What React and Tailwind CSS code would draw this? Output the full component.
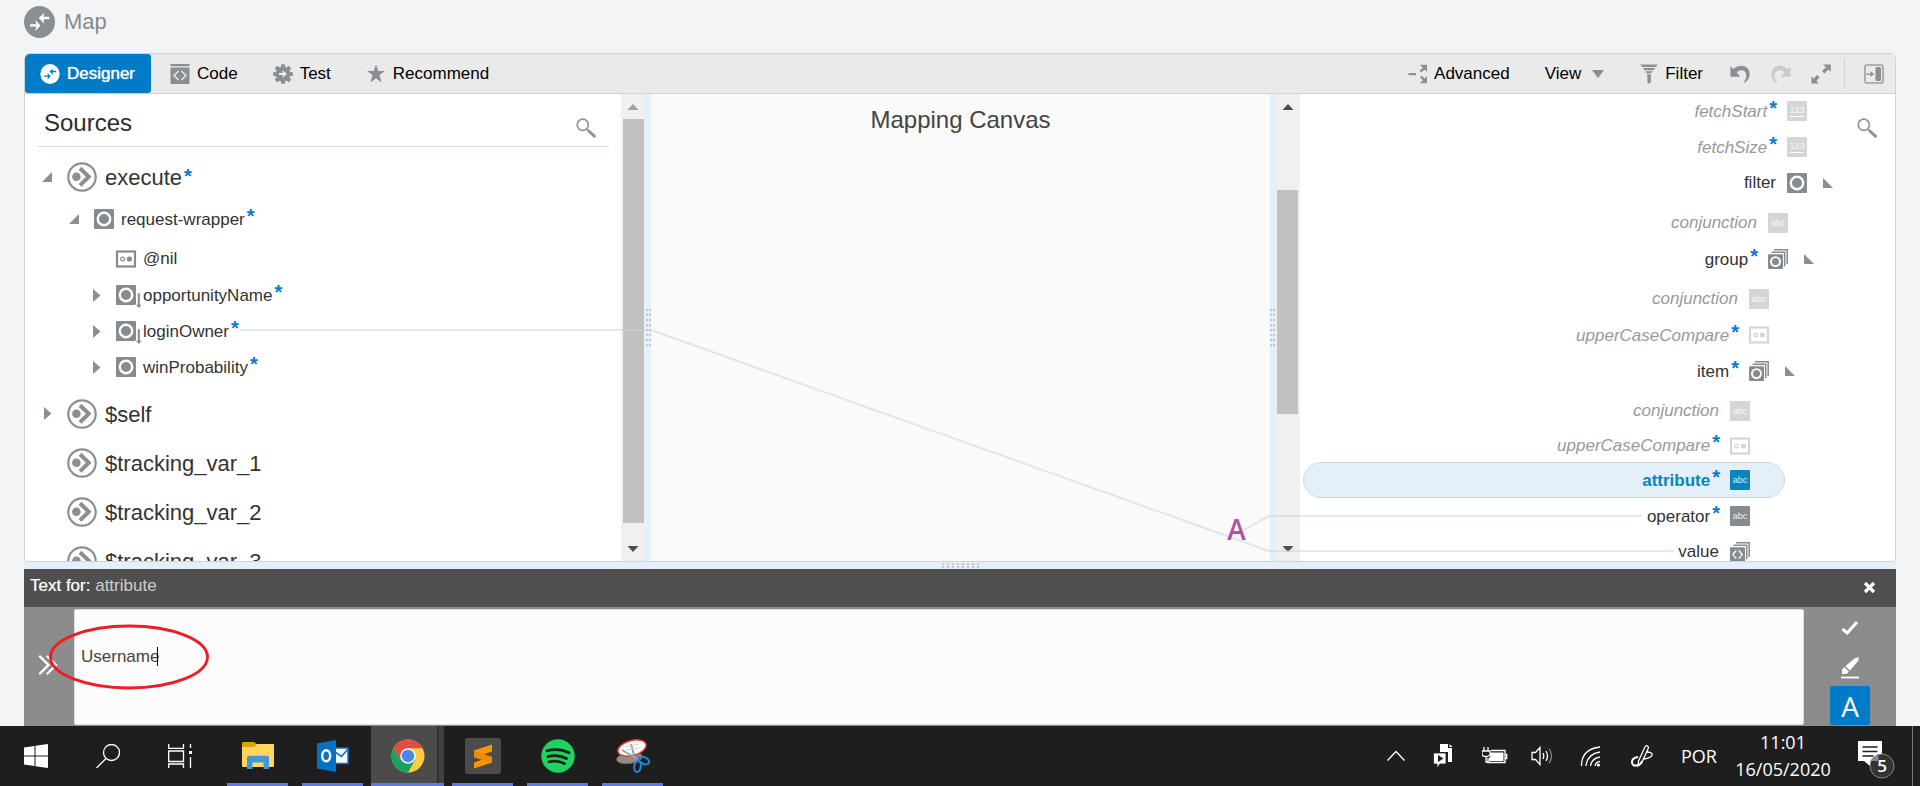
import React from "react";

const SANS = "font-['Liberation_Sans',Arial,sans-serif]";
const SEGOE = "font-['Open_Sans','Noto_Sans',sans-serif]";

/* ---------- glyphs ---------- */

function MapGlyph({ className, disc, arrow }) {
  return (
    <svg viewBox="0 0 31 32" className={className} aria-hidden="true">
      <ellipse cx="15.5" cy="16" rx="15.5" ry="16" fill={disc} />
      <path d="M6 18.200h6.200l-.9-4.200 5.200 5.500-5.200 5.500.9-4.500H6z" fill={arrow} />
      <path d="M25.300 10.800h-5.800l.8-3.800-5.600 5.100 5.400 5.400-.6-4.200h5.800z" fill={arrow} />
    </svg>
  );
}

function CodeGlyph() {
  return (
    <svg viewBox="0 0 20 20" className="size-5" aria-hidden="true">
      <path d="M.5 0h19v2.2H.5zM.5 3.6h19V20H.5z" fill="#8a8f93" />
      <path d="M8.6 7 4 11.6 8.6 16M11.4 7l4.6 4.6-4.6 4.4" fill="none" stroke="#ececec" strokeWidth="1.4" />
    </svg>
  );
}

function GearGlyph() {
  return (
    <svg viewBox="0 0 20 20" className="size-5" aria-hidden="true">
      <g fill="#8a8f93">
        <circle cx="10" cy="10" r="7.4" />
        {[0, 45, 90, 135].map((a) => (
          <rect key={a} x="8" y="0.2" width="4" height="19.6" rx="0.6" transform={`rotate(${a} 10 10)`} />
        ))}
      </g>
      <path d="M6 9h3.6V6.3L14 10l-4.400 3.700V11H6z" fill="#ececec" />
    </svg>
  );
}

function StarGlyph() {
  return (
    <svg viewBox="0 0 18 19" className="h-[19px] w-[18px]" aria-hidden="true">
      <path d="M9 .5l2.200 6.400H18l-5.400 4.200 2 7.400L9 14.200l-5.600 4.300 2-7.400L0 6.900h6.800z" fill="#8a8f93" />
    </svg>
  );
}

function AdvancedGlyph() {
  return (
    <svg viewBox="0 0 20 20" className="size-5" aria-hidden="true">
      <g fill="#8a8f93">
        <path d="M.5 9h7.500v2.200H.5zM11.500.8H19v7l-2.300-2.200-3.400 3-1.700-1.800 3.300-3.300zM11.500 19.200H19v-7l-2.300 2.200-3-2.600-1.700 1.800 2.900 2.900z" />
      </g>
    </svg>
  );
}

function FunnelGlyph() {
  return (
    <svg viewBox="0 0 18 20" className="h-5 w-[18px]" aria-hidden="true">
      <path d="M.5.5h17L16 3H2zM3 4h12l-1.500 2.200h-9zM5.300 7.200h7.400l-1.400 2H6.700zM7.200 10.200h3.600v8l-2.400 1.500H7.600z" fill="#8a8f93" />
    </svg>
  );
}

function UndoGlyph({ flip }) {
  return (
    <svg viewBox="0 0 20 18" className={flip ? "h-[18px] w-5 -scale-x-100" : "h-[18px] w-5"} aria-hidden="true">
      <path
        d="M.4 1.200l3 2.900C6 1.600 9 .8 11.500.8c5 0 8.200 3.700 8.200 8 0 3.500-1.500 6.400-4.300 8.700h-2c2.100-2.400 2.900-4.700 2.900-7 0-3.100-2.100-5.300-5-5.300-1.800 0-3.400.8-4.700 2l3.600 4.600H.4z"
        fill={flip ? "#c9cccf" : "#8a8f93"}
      />
    </svg>
  );
}

function ExpandGlyph() {
  return (
    <svg viewBox="0 0 20 20" className="size-5" aria-hidden="true">
      <path
        d="M12 .5h7.800v7.400l-2.400-2.300-4 4L11 7.200l3.800-4zM8 19.500H.4v-7.200l2.200 2.100 3.600-3.400 2.400 2.300-3.300 3.600z"
        fill="#8a8f93"
      />
    </svg>
  );
}

function PanelGlyph() {
  return (
    <svg viewBox="0 0 20 20" className="size-5" aria-hidden="true">
      <rect x="1" y="1" width="18" height="18" rx="1.500" fill="none" stroke="#9a9ea2" strokeWidth="1.600" />
      <rect x="11.500" y="3" width="5.500" height="14" rx="1.500" fill="#8a8f93" />
      <path d="M2.500 9.400h4V7.200L10 10l-3.500 2.900v-2.200h-4z" fill="#8a8f93" />
    </svg>
  );
}

function SearchGlyph() {
  return (
    <svg viewBox="0 0 20 20" className="size-5" aria-hidden="true">
      <circle cx="6.800" cy="6.800" r="5.600" fill="none" stroke="#8f9396" strokeWidth="1.700" />
      <path d="M10.800 11l2 2" stroke="#8f9396" strokeWidth="1.600" />
      <path d="M12.800 13l5.600 5.200" stroke="#8f9396" strokeWidth="3" strokeLinecap="round" />
    </svg>
  );
}

function Arrow({ dir }) {
  const d = { open: "M10 0v10H0z", openRight: "M0 0v10h10z", closed: "M2 0v13L9.500 6.500z" }[dir];
  return (
    <svg viewBox={dir === "closed" ? "0 0 10 13" : "0 0 10 10"} className={dir === "closed" ? "h-[13px] w-[10px]" : "size-[10px]"} aria-hidden="true">
      <path d={d} fill="#8a8f91" />
    </svg>
  );
}

function RootGlyph() {
  return (
    <svg viewBox="0 0 30 30" className="size-[30px]" aria-hidden="true">
      <circle cx="15" cy="15" r="13.700" fill="none" stroke="#8a8f93" strokeWidth="2.200" />
      <circle cx="9.400" cy="14.800" r="4.300" fill="#8a8f93" />
      <path d="M13 6.200l8.800 8.600L13 23.400" fill="none" stroke="#8a8f93" strokeWidth="4" />
    </svg>
  );
}

function NodeGlyph({ kind, tone = "#868b8f" }) {
  const text = kind === "abc" || kind === "123";
  return (
    <svg viewBox="0 0 20 20" className="size-5 overflow-visible font-normal not-italic" aria-hidden="true">
      {(kind === "element" || kind === "elementKey") && (
        <>
          <rect width="20" height="20" rx="1" fill={tone} />
          <circle cx="10" cy="10" r="6.200" fill="none" stroke="#fff" strokeWidth="2.400" />
        </>
      )}
      {kind === "elementKey" && (
        <path d="M21.500 8h2.600v11.500h2l-3.300 3.800-3.300-3.800h2z" fill={tone} stroke="#fff" strokeWidth="0.500" />
      )}
      {kind === "bool" && (
        <>
          <rect x="1" y="2.500" width="18" height="15" fill="none" stroke={tone} strokeWidth="2.200" />
          <circle cx="6.600" cy="10" r="1.900" fill="none" stroke={tone} strokeWidth="1.200" />
          <circle cx="13.400" cy="10" r="2.600" fill={tone} />
        </>
      )}
      {(kind === "stack" || kind === "codeStack") && (
        <>
          <path d="M6 .8h13.200V15M3.500 3.300h13.200v14" fill="none" stroke={tone} strokeWidth="1.500" />
          <rect x="0" y="5.200" width="15" height="14.800" rx="1" fill={tone} />
          {kind === "stack" ? (
            <circle cx="7.500" cy="12.600" r="4.500" fill="none" stroke="#fff" strokeWidth="1.900" />
          ) : (
            <path d="M6.300 8.500l-3.500 4.100 3.500 4.100M8.700 8.500l3.500 4.100-3.500 4.100" fill="none" stroke="#fff" strokeWidth="1.300" />
          )}
        </>
      )}
      {text && (
        <>
          <rect width="20" height="20" rx="1" fill={tone} />
          <text x="10" y={kind === "abc" ? 13 : 12} textAnchor="middle" fontSize="9" fill="#fff" opacity="0.850">
            {kind}
          </text>
          {kind === "123" && <path d="M3 15.500h14" stroke="#fff" strokeWidth="1" />}
        </>
      )}
    </svg>
  );
}

const Star = () => <span className="ml-[2px] align-[2px] text-[20px] leading-none font-bold text-[#0a78d0]">*</span>;

/* ---------- toolbar ---------- */

function ToolButton({ label, children, className = "" }) {
  return (
    <button type="button" className={`flex h-full items-center text-[17px] text-black ${className}`}>
      {children}
      {label && <span>{label}</span>}
    </button>
  );
}

function Toolbar() {
  return (
    <div className="flex h-10 shrink-0 items-stretch border-b border-[#d0d2d4] bg-[#eaeaea]">
      <nav className="flex" aria-label="Mapper views">
        <button type="button" className="flex w-[126px] items-center gap-[7px] rounded-[3px] bg-[#007bc8] pl-[15px] text-[17px] text-white [text-shadow:0_0_1px_#fff]">
          <MapGlyph className="size-5" disc="#fff" arrow="#007bc8" />
          Designer
        </button>
        <ToolButton label="Code" className="ml-[19px] gap-[7px]"><CodeGlyph /></ToolButton>
        <ToolButton label="Test" className="ml-[35px] gap-[7px]"><GearGlyph /></ToolButton>
        <ToolButton label="Recommend" className="ml-9 gap-2"><StarGlyph /></ToolButton>
      </nav>
      <div className="ml-auto flex items-center pr-[11px]">
        <ToolButton label="Advanced" className="mr-[35px] gap-[6px]"><AdvancedGlyph /></ToolButton>
        <button type="button" className="mr-9 flex items-center gap-[11px] text-[17px] text-black">
          View
          <svg viewBox="0 0 12 8" className="h-2 w-3" aria-hidden="true"><path d="M0 0h12L6 8z" fill="#8a8f93" /></svg>
        </button>
        <ToolButton label="Filter" className="mr-[27px] gap-[7px]"><FunnelGlyph /></ToolButton>
        <button type="button" aria-label="Undo" className="mr-[21px]"><UndoGlyph /></button>
        <button type="button" aria-label="Redo" className="mr-5"><UndoGlyph flip /></button>
        <button type="button" aria-label="Maximize"><ExpandGlyph /></button>
        <span className="mx-[13px] h-[31px] w-px bg-[#cfd1d3]" />
        <button type="button" aria-label="Toggle side panel" className="ml-[6px]"><PanelGlyph /></button>
      </div>
    </div>
  );
}

/* ---------- scrollbars and splitters ---------- */

function ScrollBar({ thumb, topColor }) {
  return (
    <div className="flex w-6 shrink-0 flex-col items-center bg-[#f0f0f0]">
      <svg viewBox="0 0 24 25" className="h-[25px] w-6 shrink-0" aria-hidden="true"><path d="M6.500 16h11L12 10z" fill={topColor} /></svg>
      <div className={thumb[0]} />
      <div className={`w-[21px] bg-[#c1c1c1] ${thumb[1]}`} />
      <div className={thumb[2]} />
      <svg viewBox="0 0 24 25" className="h-[25px] w-6 shrink-0" aria-hidden="true"><path d="M6.500 10h11L12 16z" fill="#4d4d4d" /></svg>
    </div>
  );
}

function Splitter() {
  return (
    <div className="flex w-[6px] shrink-0 flex-col items-center justify-center gap-[3px] bg-[#e3f0fb]">
      {Array.from({ length: 8 }, (_, i) => (
        <div key={i} className="flex gap-px">
          <span className="size-[2px] bg-[#c4c6c8]" />
          <span className="size-[2px] bg-[#c4c6c8]" />
        </div>
      ))}
    </div>
  );
}

/* ---------- sources ---------- */

function RootNode({ name, arrow, required, children }) {
  return (
    <li className={children ? "pb-1" : ""}>
      <div className="flex h-[49px] items-center pl-[17px] text-[22px] text-[#333]">
        <span className="w-[25px]">{arrow && <Arrow dir={arrow} />}</span>
        <RootGlyph />
        <span className="ml-2 pt-[2px]">
          {name}
          {required && <Star />}
        </span>
      </div>
      {children}
    </li>
  );
}

function ChildNode({ name, icon, arrow, required, indent }) {
  return (
    <div className={`flex h-9 items-center text-[17px] text-[#333] ${indent}`}>
      <span className="w-[25px]">{arrow && <Arrow dir={arrow} />}</span>
      <NodeGlyph kind={icon} />
      <span className="ml-[7px]">
        {name}
        {required && <Star />}
      </span>
    </div>
  );
}

function Sources() {
  return (
    <section className="min-w-0 flex-[596_1_0%] overflow-hidden bg-white">
      <div className="mx-3 mb-[5px] flex h-[53px] items-center justify-between border-b border-[#d3dee5] pr-[13px] pl-[7px]">
        <h2 className="pt-[6px] text-[24px] text-[#2b2b2b]">Sources</h2>
        <button type="button" aria-label="Search sources" className="pt-4"><SearchGlyph /></button>
      </div>
      <ul>
        <RootNode name="execute" arrow="open" required>
          <ChildNode name="request-wrapper" icon="element" arrow="open" required indent="pl-11" />
          <div className="pt-1">
            <ChildNode name="@nil" icon="bool" indent="pl-[66px]" />
            <ChildNode name="opportunityName" icon="elementKey" arrow="closed" required indent="pl-[66px]" />
            <ChildNode name="loginOwner" icon="elementKey" arrow="closed" required indent="pl-[66px]" />
            <ChildNode name="winProbability" icon="element" arrow="closed" required indent="pl-[66px]" />
          </div>
        </RootNode>
        <RootNode name="$self" arrow="closed" />
        <RootNode name="$tracking_var_1" />
        <RootNode name="$tracking_var_2" />
        <RootNode name="$tracking_var_3" />
      </ul>
    </section>
  );
}

/* ---------- targets ---------- */

const TARGETS = [
  { name: "fetchStart", icon: "123", pad: "pr-[62px]", dim: true, required: true },
  { name: "fetchSize", icon: "123", pad: "pr-[62px]", dim: true, required: true },
  { name: "filter", icon: "element", pad: "pr-[62px]", open: true },
  { name: "conjunction", icon: "abc", pad: "pr-[81px]", dim: true, first: true },
  { name: "group", icon: "stack", pad: "pr-[81px]", required: true, open: true },
  { name: "conjunction", icon: "abc", pad: "pr-[100px]", dim: true, first: true },
  { name: "upperCaseCompare", icon: "bool", pad: "pr-[100px]", dim: true, required: true },
  { name: "item", icon: "stack", pad: "pr-[100px]", required: true, open: true },
  { name: "conjunction", icon: "abc", pad: "pr-[119px]", dim: true, first: true },
  { name: "upperCaseCompare", icon: "bool", pad: "pr-[119px]", dim: true, required: true, last: true },
  { name: "attribute", icon: "abc", selected: true, required: true },
  { name: "operator", icon: "abc", pad: "pr-[119px]", required: true },
  { name: "value", icon: "codeStack", pad: "pr-[119px]" },
];

function TargetRow({ name, icon, pad, dim, required, open, first, last, selected }) {
  const look = selected
    ? "ml-[3px] mr-[110px] rounded-full border border-[#d3d6d9] bg-[#e3f0fa] pr-2 font-bold text-[#0a84bd]"
    : dim
      ? `${pad} text-[#999]`
      : `${pad} text-[#333]`;
  return (
    <li className={`flex items-center justify-end text-[17px] ${look} ${last ? "h-[33px]" : "h-9"} ${first ? "mt-1" : ""}`}>
      <span>
        <span className={dim ? "italic" : ""}>{name}</span>
        {required && <Star />}
      </span>
      <span className={required ? "ml-[10px]" : "ml-[11px]"}>
        <NodeGlyph kind={icon} tone={selected ? "#0a84bd" : dim ? "#d3d5d7" : "#868b8f"} />
      </span>
      <span className="flex w-[26px] justify-end">{open && <Arrow dir="openRight" />}</span>
    </li>
  );
}

function Targets() {
  return (
    <section className="relative min-w-0 flex-[595_1_0%] overflow-hidden bg-white">
      <ul className="-mt-px">
        {TARGETS.map((t, i) => <TargetRow key={i} {...t} />)}
      </ul>
      <button type="button" aria-label="Search targets" className="absolute top-6 right-[18px]"><SearchGlyph /></button>
    </section>
  );
}

/* ---------- expression editor ---------- */

function Editor() {
  return (
    <section className="relative mx-6 shrink-0">
      <header className="flex h-[38px] items-center justify-between bg-[#4f4f4f] pr-5 pb-1 pl-[6px] text-[17px]">
        <label htmlFor="expression" className="text-[#ccc]">
          <span className="text-white [text-shadow:0_0_1px_#aaa]">Text for:</span> attribute
        </label>
        <button type="button" aria-label="Close" className="pt-[2px]">
          <svg viewBox="0 0 13 13" className="size-[13px]" aria-hidden="true"><path d="M2 2l9 9M11 2l-9 9" stroke="#fff" strokeWidth="3.200" /></svg>
        </button>
      </header>
      <div className="flex h-[119px] bg-[#8c8c8c]">
        <button type="button" aria-label="Expand components" className="flex w-[50px] items-center justify-end pr-4 pb-1">
          <svg viewBox="0 0 20 20" className="size-5" aria-hidden="true">
            <path d="M2 1.500l8.500 8.500L2 18.500M9.500 1.500L18 10l-8.500 8.500" fill="none" stroke="#fff" strokeWidth="2.400" strokeLinecap="round" />
          </svg>
        </button>
        <textarea
          id="expression"
          defaultValue="Username"
          className="mt-[2px] mb-px min-w-0 flex-1 resize-none rounded-[2px] border border-[#dedede] bg-[#fcfcfc] px-[6px] pt-[35px] text-[17px] leading-6 text-[#444] outline-none"
        />
        <div className="flex w-[92px] flex-col items-center">
          <button type="button" aria-label="Accept" className="flex h-[41px] items-center">
            <svg viewBox="0 0 18 14" className="h-[14px] w-[18px]" aria-hidden="true"><path d="M1.500 8l4.700 4L16 1" fill="none" stroke="#fff" strokeWidth="3" /></svg>
          </button>
          <button type="button" aria-label="Clear" className="flex h-[38px] items-center pt-[2px]">
            <svg viewBox="0 0 20 22" className="h-[22px] w-5" aria-hidden="true">
              <path d="M18.500 0v3.500L10 13.500 5.300 9.300 14.500 1.500zM4.300 10.300l4.600 4.200-2 2.200L2 17v-4.500z" fill="#fff" />
              <path d="M1 20.500h18" stroke="#fff" strokeWidth="1.800" />
            </svg>
          </button>
          <button type="button" className="flex h-[39px] w-10 items-center justify-center rounded-[2px] bg-[#007bc8] font-['Open_Sans',sans-serif] text-[28px] leading-none text-white">A</button>
        </div>
      </div>
      <span className="absolute top-[78px] left-[133px] h-[19px] w-px bg-black" />
      <svg viewBox="0 0 162 66" className="pointer-events-none absolute top-[55px] left-6 h-[66px] w-[162px]" aria-hidden="true">
        <ellipse cx="81" cy="33" rx="78.500" ry="31" fill="none" stroke="#ee1c23" strokeWidth="2.800" />
      </svg>
    </section>
  );
}

/* ---------- taskbar ---------- */

const PINNED = [
  {
    label: "File Explorer",
    art: (
      <svg viewBox="0 0 32 28" className="h-7 w-8" aria-hidden="true">
        <path d="M0 1.500Q0 0 1.500 0H12l3 2.500V8H0z" fill="#e3a109" />
        <path d="M0 5h12l3-3h17v21.500Q32 25 30.500 25h-29Q0 25 0 23.500z" fill="#ffd75e" />
        <path d="M5 27V15.500Q5 13.800 7 13.800h18q2 0 2 1.700V27h-5.500v-6.500h-11V27z" fill="#3f97dc" />
      </svg>
    ),
  },
  {
    label: "Outlook",
    art: (
      <svg viewBox="0 0 32 32" className="size-8" aria-hidden="true">
        <path d="M18 8h13v15.500H18z" fill="#fff" stroke="#0a70c6" strokeWidth="1.400" />
        <path d="M18 12l6.500 4.500L31 9" fill="none" stroke="#0a70c6" strokeWidth="1.600" />
        <path d="M0 3.500L19 0v32L0 28.500z" fill="#0572c6" />
        <ellipse cx="9.200" cy="15.800" rx="4" ry="5.500" fill="none" stroke="#fff" strokeWidth="2.400" />
      </svg>
    ),
  },
  {
    label: "Chrome",
    active: true,
    art: (
      <svg viewBox="0 0 34 34" className="size-[34px]" aria-hidden="true">
        <circle cx="17" cy="17" r="16.500" fill="#fdcc40" />
        <path d="M17 17L9.800 21 2.700 8.800A16.500 16.500 0 0 0 17 33.500l7-12.500z" fill="#16a361" />
        <path d="M17 17V9.300h14.600A16.500 16.500 0 0 0 2.700 8.700L9.800 21z" fill="#dd4f43" />
        <circle cx="17" cy="17" r="7.800" fill="#f5f5f5" />
        <circle cx="17" cy="17" r="6.200" fill="#4688f1" />
      </svg>
    ),
  },
  {
    label: "Sublime Text",
    art: (
      <svg viewBox="0 0 36 36" className="size-9" aria-hidden="true">
        <rect width="36" height="36" rx="2.500" fill="#4b4b4b" />
        <path d="M9 12.500L27 6.500v7L9 19.500zM9 24.500L27 18.500v6L9 30.500z" fill="#ff9800" />
        <path d="M9 12.700l18 6v6.300L9 19.500z" fill="#f08a00" />
      </svg>
    ),
  },
  {
    label: "Spotify",
    art: (
      <svg viewBox="0 0 34 34" className="size-[34px]" aria-hidden="true">
        <circle cx="17" cy="17" r="16.700" fill="#1ed35f" />
        <path d="M6 11.800q12-3.200 22 2M7 17.500q10-2.600 18.500 2M8 22.800q8.500-2 15.500 1.800" fill="none" stroke="#1a1a1a" strokeWidth="2.700" strokeLinecap="round" />
      </svg>
    ),
  },
  {
    label: "Snipping Tool",
    art: (
      <svg viewBox="0 0 34 34" className="size-[34px]" aria-hidden="true">
        <ellipse cx="13.500" cy="19" rx="13" ry="5.500" fill="#8d8d8d" stroke="#c44" strokeWidth="0.700" transform="rotate(-8 13.500 19)" />
        <ellipse cx="16" cy="9" rx="14.500" ry="7.500" fill="#fff" stroke="#e33" strokeWidth="1.400" transform="rotate(-15 16 9)" />
        <path d="M6 11l15 9M15 5l4 15" stroke="#9aa0a8" strokeWidth="2" />
        <path d="M9 8l14-3M10 11l13-2" stroke="#cfd3d8" strokeWidth="1" />
        <g fill="none" stroke="#1b86d0" strokeWidth="2.200">
          <ellipse cx="21.500" cy="27.500" rx="3.300" ry="5.500" transform="rotate(10 21.500 27.500)" />
          <ellipse cx="28" cy="21.500" rx="5.500" ry="3.300" transform="rotate(25 28 21.500)" />
        </g>
      </svg>
    ),
  },
];

const TRAY = [
  ["Show hidden icons", <path key="a" d="M3.500 17.500l8.500-9 8.500 9" />],
  [
    "Documents",
    <g key="b" fill="#fff" stroke="none">
      <path d="M7 1h8v4h4v14h-4V9H7zM16.500 1L19.500 4h-3z" />
      <path d="M.5 10H13v11H7l-3 4v-4H.5z" stroke="#1e1e1e" strokeWidth="0.800" />
      <path d="M5 12v7l5.500-3.500z" fill="#1e1e1e" />
    </g>,
  ],
  [
    "Battery",
    <g key="c">
      <path d="M2 4v4M6 4v4M0 8h8v3q0 2.500-4 2.500T0 11zM4 13.500V19h3.500" />
      <path d="M9 7.500h14v12H6V15M23.500 11.500h1.200v4h-1.200" />
      <path d="M8 9.500h13.500v8.500H7V15q2-1 1-4z" fill="#fff" stroke="none" />
    </g>,
  ],
  [
    "Volume",
    <g key="d">
      <path d="M1 9.500h3.500L9 4.500v17L4.500 16.500H1zM12 10q1.500 3 0 6M15 8q3 5 0 10" />
      <path d="M18 5.500q5 7.500 0 15" opacity="0.450" />
    </g>,
  ],
  [
    "Network",
    <g key="e">
      <path d="M1.500 23q0-17 18.500-19M6 23Q7 11 20 9M10.500 23q1-7.500 9.500-9M15 23q.5-4 5-4.500" />
      <circle cx="18.500" cy="22" r="1.600" fill="#fff" stroke="none" />
    </g>,
  ],
  [
    "Pen",
    <g key="f">
      <path d="M9.500 18L16 4q1-2 2.500-1t.5 3L12.500 20l-3.500 3zM17 9q7 0 6 3t-8 4" />
      <path d="M9 14q-6 1-6 5t4.500 3.500T13 18" strokeWidth="2" />
    </g>,
  ],
];

function Taskbar() {
  return (
    <footer className={`flex h-[60px] shrink-0 items-stretch bg-[#1e1e1e] text-[18px] text-white ${SEGOE}`}>
      <button type="button" aria-label="Start" className="flex w-[72px] items-center justify-center">
        <svg viewBox="0 0 24 24" className="size-6" aria-hidden="true"><path d="M0 3.400l10.500-1.500v9.500H0zM11.500 1.700L24 0v11.400H11.500zM0 12.500h10.500V22L0 20.600zM11.500 12.500H24V24l-12.500-1.700z" fill="#fff" /></svg>
      </button>
      <button type="button" aria-label="Search" className="flex w-[72px] items-center justify-center">
        <svg viewBox="0 0 24 24" className="size-6" aria-hidden="true"><circle cx="15.500" cy="8.500" r="8" fill="none" stroke="#fff" strokeWidth="1.300" /><path d="M10 14.500L.5 24" stroke="#fff" strokeWidth="1.300" /></svg>
      </button>
      <button type="button" aria-label="Task view" className="mr-1 flex w-[72px] items-center justify-center">
        <svg viewBox="0 0 24 24" className="size-6" aria-hidden="true"><path d="M.7 0v4.300h14.800V0M.7 7h14.800v10.500H.7zM.7 24v-4h14.800v4M22.500 0v4M22.500 13v11" fill="none" stroke="#fff" strokeWidth="1.300" /><path d="M21 7h3v3h-3z" fill="#fff" /></svg>
      </button>
      {PINNED.map((p) => (
        <button
          key={p.label}
          type="button"
          aria-label={p.label}
          className={p.active ? "mr-px ml-px flex w-[73px] flex-col items-stretch bg-[linear-gradient(90deg,#4b4b4b_66px,#303030_66px,#303030_68px,#404040_68px)]" : "flex w-[75px] flex-col items-center"}
        >
          <span className="flex flex-1 items-center justify-center pt-[3px]">{p.art}</span>
          <span className={p.active ? "h-[3px] bg-[#6577d9]" : "h-[3px] w-[61px] bg-[#6577d9]"} />
        </button>
      ))}
      <div className="ml-auto flex items-center">
        {TRAY.map(([label, art]) => (
          <button key={label} type="button" aria-label={label} className="flex w-[49px] justify-center">
            <svg viewBox="0 0 26 26" className="size-[26px]" fill="none" stroke="#fff" strokeWidth="1.300" aria-hidden="true">{art}</svg>
          </button>
        ))}
        <button type="button" className="w-[66px] text-center">POR</button>
        <button type="button" className="w-[102px] text-center leading-[27px]">
          <span className="block">11:01</span>
          <span className="block">16/05/2020</span>
        </button>
        <button type="button" aria-label="5 notifications" className="flex w-[78px] pt-[10px] pl-6">
          <svg viewBox="0 0 38 42" className="h-[42px] w-[38px]" aria-hidden="true">
            <path d="M0 1h24v20H13l-1 5-6-5H0z" fill="#fff" />
            <path d="M4.500 7h15M4.500 11.500h15M4.500 16h11" stroke="#1e1e1e" strokeWidth="1.300" />
            <circle cx="24" cy="26" r="12" fill="#333" stroke="#888" strokeWidth="1" />
            <path d="M12.500 21h8V15q-6 1-8 6z" fill="#888" />
            <text x="24" y="32" textAnchor="middle" fontSize="17" fontWeight="600" fill="#fff">5</text>
          </svg>
        </button>
        <span className="mr-[7px] h-[60px] w-px bg-[#777]" />
      </div>
    </footer>
  );
}

/* ---------- page ---------- */

export default function App() {
  return (
    <div className={`flex h-screen flex-col overflow-hidden bg-[#f2f4f6] ${SANS}`}>
      <header className="flex h-[53px] shrink-0 items-center gap-[9px] pb-[10px] pl-6">
        <MapGlyph className="h-8 w-[31px]" disc="#8a8f93" arrow="#fff" />
        <h1 className="text-[22px] text-[#8a8a8a]">Map</h1>
      </header>

      <main className="mx-6 flex min-h-0 flex-1 flex-col overflow-hidden rounded-t-[6px] rounded-b-[3px] border border-[#d0d2d4]">
        <Toolbar />
        <div className="relative flex min-h-0 flex-1">
          <Sources />
          <ScrollBar thumb={["", "grow-[404]", "grow-[13]"]} topColor="#a0a0a0" />
          <Splitter />
          <section className="relative min-w-0 flex-[618_1_0%] bg-[#fafafa] pt-[10px] text-center">
            <h2 className="text-[24px] leading-8 text-[#444]">Mapping Canvas</h2>
            <span className="absolute right-6 bottom-[18px] z-10 font-['Open_Sans',sans-serif] text-[28px] leading-7 font-semibold text-[#b0529f]">A</span>
          </section>
          <Splitter />
          <ScrollBar thumb={["grow-[71]", "grow-[224]", "grow-[122]"]} topColor="#4d4d4d" />
          <Targets />
          <svg viewBox="0 0 1870 467" preserveAspectRatio="none" className="pointer-events-none absolute inset-0 size-full" aria-hidden="true">
            <path d="M215 236H626L1244 457H1649M1219 436L1244 422H1617" fill="none" stroke="#c5d2d9" strokeOpacity="0.500" strokeWidth="2" />
          </svg>
        </div>
      </main>

      <div className="mx-6 flex h-[7px] shrink-0 items-center justify-center bg-[#e3f0fb]">
        <div className="grid grid-cols-8 gap-x-[3px] gap-y-px">
          {Array.from({ length: 16 }, (_, i) => <span key={i} className="size-[2px] bg-[#c4c6c8]" />)}
        </div>
      </div>

      <Editor />
      <Taskbar />
    </div>
  );
}
